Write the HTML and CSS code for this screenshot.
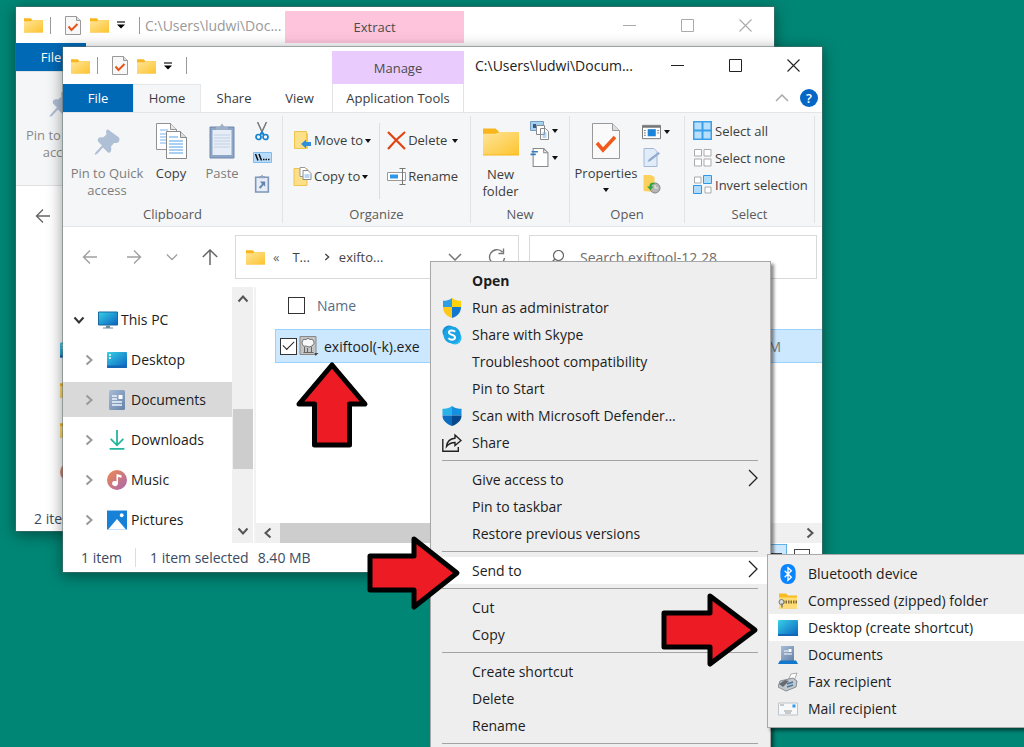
FILE: index.html
```html
<!DOCTYPE html>
<html lang="en">
<head>
<meta charset="utf-8">
<title>File Explorer</title>
<link rel="stylesheet" href="styles.css">
</head>
<body>
<svg class="defs" aria-hidden="true">
  <defs>
    <linearGradient id="gold" x1="0" y1="0" x2="1" y2="1"><stop offset="0" stop-color="#ffe59a"/><stop offset="1" stop-color="#fcc42f"/></linearGradient>
    <linearGradient id="sea" x1="0" y1="0" x2="1" y2="1"><stop offset="0" stop-color="#38cfe6"/><stop offset="1" stop-color="#0a63c0"/></linearGradient>
    <linearGradient id="tune" x1="0" y1="0" x2="1" y2="1"><stop offset="0" stop-color="#f08a4b"/><stop offset="1" stop-color="#a866b4"/></linearGradient>
    <linearGradient id="slate" x1="0" y1="0" x2="1" y2="1"><stop offset="0" stop-color="#a8bcd6"/><stop offset="1" stop-color="#6482a8"/></linearGradient>
  </defs>
  <symbol id="folder" viewBox="0 0 20 16"><path d="M0 1h7l2 2h11v13H0z" fill="#f9b61c"/><path d="M0 4h7l2-1h11v12.500H0z" fill="url(#gold)"/></symbol>
  <symbol id="doccheck" viewBox="0 0 16 19"><path d="M.5.5h11l4 4v14H.5z" fill="#f8f8f8" stroke="#999"/><path d="M11.500.5v4h4" fill="#ddd" stroke="#999"/><path d="M3.500 10.500l3 3.500 6-6" fill="none" stroke="#e8531b" stroke-width="2"/></symbol>
  <symbol id="custom" viewBox="0 0 8 8"><path d="M0 1h8" stroke="#222" stroke-width="1.300"/><path d="M0 3.500h8L4 7.500z" fill="#000"/></symbol>
  <symbol id="caret" viewBox="0 0 6 4"><path d="M0 0h6L3 4z" fill="#111"/></symbol>
  <symbol id="min" viewBox="0 0 13 13"><path d="M0 6.500h13" stroke="currentColor"/></symbol>
  <symbol id="max" viewBox="0 0 13 13"><path d="M.5.5h12v12H.5z" fill="none" stroke="currentColor"/></symbol>
  <symbol id="close" viewBox="0 0 13 13"><path d="M.5.5l12 12m0-12l-12 12" stroke="currentColor" stroke-width="1.100"/></symbol>
  <symbol id="pin" viewBox="0 0 26 27"><path d="M14 1L25 9c1.500 4-1 6-5 5.500l-3 3.500c1 5-1 7-3 6l-5-5-6 6.500-2.500 1 1-2.500L8 17l-4-4c-1-3 1-5 5-4l3.500-3c-1-3 0-5.500 1.500-5z" fill="#afbfd5"/></symbol>
  <symbol id="left" viewBox="0 0 16 16"><path d="M15 8H1.500M8 1.500L1.500 8 8 14.500" fill="none" stroke="currentColor" stroke-width="1.400"/></symbol>
  <symbol id="right" viewBox="0 0 16 16"><path d="M1 8h13.500M8 1.500L14.500 8 8 14.500" fill="none" stroke="currentColor" stroke-width="1.400"/></symbol>
  <symbol id="up" viewBox="0 0 16 16"><path d="M8 16V1M.8 8L8 1l7.200 7" fill="none" stroke="currentColor" stroke-width="1.500"/></symbol>
  <symbol id="down" viewBox="0 0 14 8"><path d="M1 1l6 6 6-6" fill="none" stroke="currentColor" stroke-width="1.500"/></symbol>
  <symbol id="chev" viewBox="0 0 8 12"><path d="M1.500 1.500L6.500 6l-5 4.500" fill="none" stroke="currentColor" stroke-width="2"/></symbol>
  <symbol id="chevd" viewBox="0 0 12 8"><path d="M1.500 1.500L6 6.500l4.500-5" fill="none" stroke="currentColor" stroke-width="2"/></symbol>
  <symbol id="chevu" viewBox="0 0 12 8"><path d="M1.500 6.500L6 1.500l4.500 5" fill="none" stroke="currentColor" stroke-width="2"/></symbol>
  <symbol id="copy" viewBox="0 0 32 36"><g stroke="#929292"><path d="M1.500.5h14l6 6v20h-20z" fill="#fff"/><path d="M15.500.5v6h6" fill="#e7e7e7"/></g><path d="M5 7h8M5 11h13M5 14h13M5 17h13M5 20h13" stroke="#79b4ee"/><g stroke="#888"><path d="M11.500 8.500h14l6 6v21h-20z" fill="#fff"/><path d="M25.500 8.500v6h6" fill="#ddd"/></g><path d="M14 14h9M14 18h14M14 21h14M14 24h14M14 27h14M14 30h14" stroke="#559fe8"/></symbol>
  <symbol id="paste" viewBox="0 0 26 36"><path d="M1 4h24v31H1z" fill="#8da5c6" stroke="#7088ad"/><path d="M3.500 7h19v25h-19z" fill="#e6edf7"/><path d="M5 12h16M5 15h16M5 18h16M5 21h16M5 24h16" stroke="#c2d0e4"/><path d="M7 7V4h3.500L13 .5 15.500 4H19v3z" fill="#9fb0c8"/></symbol>
  <symbol id="cut" viewBox="0 0 14 19"><path d="M2.500 0l6 13M11.500 0l-6 13" stroke="#777" stroke-width="1.500"/><g fill="none" stroke="#1682d0" stroke-width="1.700"><circle cx="3.500" cy="15" r="2.500"/><circle cx="10.500" cy="15" r="2.500"/><path d="M5 13l2-3 2 3"/></g></symbol>
  <symbol id="path" viewBox="0 0 19 11"><path d="M.5.5h18v10H.5z" fill="#b9dcfb" stroke="#82bdee"/><path d="M2.500 2l2.500 6.500M6 2l2.500 6.500" stroke="#111" stroke-width="1.500"/><path d="M10 7.500h7" stroke="#111" stroke-width="1.500" stroke-dasharray="1.500 1"/></symbol>
  <symbol id="pastelink" viewBox="0 0 14 18"><path d="M1 3h12v14H1z" fill="#e6edf7" stroke="#7e96b9" stroke-width="1.500"/><path d="M4 3V2h2l1-1.500L8 2h2v2H4z" fill="#90a4c1"/><path d="M5 7h5v5L8.500 10.500 5.500 14 4 12.500 7 9.500z" fill="#6684b0"/></symbol>
  <symbol id="moveto" viewBox="0 0 17 19"><path d="M.5.500h12v17H.500z" fill="#fddf88" stroke="#eec450"/><path d="M12.500 1l1.500 2v15l-1.500-1" fill="#f6c64b"/><path d="M7 13l5-4.500v2.500h5v4h-5v2.500z" fill="#2f8fdd"/></symbol>
  <symbol id="copyto" viewBox="0 0 18 19"><path d="M.5 1.500h13v17H.5z" fill="#fddf88" stroke="#eec450"/><path d="M6.500.5h5l3 3v6h-8z" fill="#fff" stroke="#999"/><path d="M9.500 3.500h5l3 3v6h-8z" fill="#fff" stroke="#888"/><path d="M11 8h5M11 10h5" stroke="#6aaceb"/></symbol>
  <symbol id="delete" viewBox="0 0 19 19"><path d="M1 1l17 17M18 1C12 6 6 12 1 18" fill="none" stroke="#de4412" stroke-width="2.200"/></symbol>
  <symbol id="rename" viewBox="0 0 19 17"><path d="M.5 4.500h18v8H.5z" fill="#fff" stroke="#999"/><path d="M3 6.500h8v4H3z" fill="#2f97e8"/><path d="M12.500.5h6M12.500 16.500h6M15.500.5v16" stroke="#777"/></symbol>
  <symbol id="newitem" viewBox="0 0 19 19"><path d="M.5.5h13v9H.5z" fill="#a6d0f2" stroke="#799dbd"/><path d="M3 3h3v4H3z" fill="#345c88"/><path d="M6.500 4.500h8v9h-8zM10.500 7.500h5l3 3v8h-8z" fill="#fff" stroke="#8a8a8a"/><path d="M12.500 12h4M12.500 14h4M12.500 16h4" stroke="#72afe9"/></symbol>
  <symbol id="easy" viewBox="0 0 17 18"><path d="M2.500.5h10l4 4v13h-14z" fill="#fff" stroke="#888"/><path d="M12.500.5v4h4" fill="none" stroke="#888"/><path d="M1 3.500h6M0 6h5" stroke="#367ebd" stroke-width="1.500"/></symbol>
  <symbol id="props" viewBox="0 0 28 36"><path d="M.5.5h20l7 7v28H.5z" fill="#fafafa" stroke="#999"/><path d="M20.500.5v7h7" fill="#ddd" stroke="#999"/><path d="M5 20l6 7L23 14" fill="none" stroke="#f05a1c" stroke-width="3.500"/></symbol>
  <symbol id="openapp" viewBox="0 0 20 15"><path d="M.5.500h19v14H.5z" fill="#fff" stroke="#747474"/><path d="M1 2h18" stroke="#747474" stroke-width="2"/><path d="M6 4.500h8.500v7.500H6z" fill="#1b83d8"/><path d="M2 6h2M2 8.500h2M2 11h2M16 6h2M16 8.500h2" stroke="#777"/></symbol>
  <symbol id="edit" viewBox="0 0 18 19"><path d="M1.500.5h10l3 3v15h-13z" fill="#e1ecfa" stroke="#a4b8d5"/><path d="M5 14l1.500-3L16 4l1.500 1.500L8 13z" fill="#91acd0"/></symbol>
  <symbol id="history" viewBox="0 0 18 19"><path d="M1 0h7l4 2v15l-11-1z" fill="#fbd15b"/><circle cx="12.500" cy="13" r="5" fill="#b6b6b6" stroke="#858585"/><path d="M12.500 10v3h3" fill="none" stroke="#eee"/><path d="M12 8c-4-1-5 1-5 3.500H4.500L8 15l3-3.500H9c0-2 1-2.500 3-2z" fill="#28a53d"/></symbol>
  <symbol id="selall" viewBox="0 0 19 19"><path d="M0 0h19v19H0z" fill="#3b9fe8"/><path d="M1.500 1.500h7v7h-7zM10.500 1.500h7v7h-7zM1.500 10.500h7v7h-7zM10.500 10.500h7v7h-7z" fill="#b8dffb"/></symbol>
  <symbol id="selnone" viewBox="0 0 19 19"><path d="M1.500 1.500h7v6.500h-7zM11 1.500h7v6.500h-7zM1.500 11h7v7h-7zM11 11h7v7h-7z" fill="#fff" stroke="#aaa"/></symbol>
  <symbol id="selinv" viewBox="0 0 19 19"><path d="M1.500 2h6.500v6H1.500zM12 12h6v6h-6z" fill="#fff" stroke="#aaa"/><path d="M10.500.5h8v8h-8zM.5 10.500h8v8h-8z" fill="#b0dcfc" stroke="#2f97e8"/></symbol>
  <symbol id="pc" viewBox="0 0 20 17"><path d="M.5.5h19v13H.5z" fill="url(#sea)" stroke="#1769a0"/><path d="M8 14h4v2h3v1H5v-1h3z" fill="#71899b"/></symbol>
  <symbol id="desk" viewBox="0 0 20 16"><rect width="20" height="16" rx="1" fill="url(#sea)"/><path d="M2 3h2M2 6h2" stroke="#fff" stroke-width="1.500"/><path d="M0 13.500h20V15q0 1-1 1H1q-1 0-1-1z" fill="#1467b5"/></symbol>
  <symbol id="deskplain" viewBox="0 0 20 16"><rect width="20" height="16" rx="1" fill="url(#sea)"/><path d="M0 14h20v2H0z" fill="#1467b5"/></symbol>
  <symbol id="docs" viewBox="0 0 16 20"><rect width="16" height="20" rx="1.500" fill="url(#slate)"/><path d="M3 6h5M3 9h5M3 12h10M3 15h10" stroke="#eef4fc" stroke-width="1.300"/><path d="M9.500 5h4v4h-4z" fill="#fff"/></symbol>
  <symbol id="downl" viewBox="0 0 14 19"><path d="M7 0v14M1 8.500l6 6 6-6M0 18h14" fill="none" stroke="#25b49c" stroke-width="1.700"/></symbol>
  <symbol id="music" viewBox="0 0 20 20"><circle cx="10" cy="10" r="10" fill="url(#tune)"/><path d="M9.500 4l5 1.200v2.500L11 7v6.500a3 2.600 0 1 1-1.500-2.200z" fill="#fff"/></symbol>
  <symbol id="pics" viewBox="0 0 19 18"><path d="M0 0h19v18H0z" fill="#1681d7"/><path d="M1 18L9.500 8 18 18z" fill="#fff"/><circle cx="14" cy="4.500" r="1.800" fill="#fff"/></symbol>
  <symbol id="exe" viewBox="0 0 19 20"><path d="M.5.5h16v18H.5z" fill="#c4c4c4" stroke="#888"/><path d="M2.500 6q1-4 4-2.500 2-2.500 4 0 4-1 4 4l-2 2.500q-3 2-6 0-4 1-4-4z" fill="#f7f7f7" stroke="#555" stroke-width=".8"/><path d="M5 16v-5M8 17v-5M12 16v-5M4 16.500h10" stroke="#666"/><path d="M15 17h4l-3 3z" fill="#444"/></symbol>
  <symbol id="uac" viewBox="0 0 20 20"><path d="M10 0C7 2.500 4 2.800 1 2.800V9h9z" fill="#2f9fe5"/><path d="M10 0c3 2.500 6 2.800 9 2.800V9h-9z" fill="#ffd20a"/><path d="M1 9c0 5 3 9 9 11V9z" fill="#ffc91a"/><path d="M19 9c0 5-3 9-9 11V9z" fill="#1277cf"/></symbol>
  <symbol id="skype" viewBox="0 0 20 20"><circle cx="7" cy="7" r="6.500" fill="#1192d8"/><circle cx="13" cy="13" r="6.500" fill="#29b8ef"/><circle cx="10" cy="10" r="8.500" fill="#1aa4e6"/><path d="M13.200 6.700C11.500 5 7 4.700 7 7.500s6 1.700 6 4.800-4.800 3-6.500.8" fill="none" stroke="#fff" stroke-width="2"/></symbol>
  <symbol id="defender" viewBox="0 0 20 21"><path d="M10 0C7 2.500 3 3 0 3v7h10z" fill="#29b2ea"/><path d="M10 0c3 2.500 7 3 10 3v7H10z" fill="#158fe0"/><path d="M0 10c0 5 4 9 10 11V10z" fill="#0c6cc0"/><path d="M20 10c0 5-4 9-10 11V10z" fill="#07488d"/></symbol>
  <symbol id="share" viewBox="0 0 20 18"><path d="M.8 5v12.200h15.500V13" fill="none" stroke="#222" stroke-width="1.400"/><path d="M13 1l6 5.500-6 5V8.500c-4 0-6 1-8.500 4C5 8 8 4.500 13 4.200z" fill="none" stroke="#222" stroke-width="1.400"/></symbol>
  <symbol id="sub" viewBox="0 0 10 18"><path d="M1 1l8 8-8 8" fill="none" stroke="#222" stroke-width="1.300"/></symbol>
  <symbol id="bt" viewBox="0 0 16 21"><rect width="16" height="21" rx="7.500" fill="#0a84ff"/><path d="M4.500 7l7 7L8 17V4l3.500 3-7 7" fill="none" stroke="#fff" stroke-width="1.400"/></symbol>
  <symbol id="zip" viewBox="0 0 20 15"><path d="M1 0h7l2 2h9v13H1z" fill="#f9bb22"/><path d="M1 4h18v11H1z" fill="#ffdc75"/><path d="M5 8.500h14" stroke="#806a35" stroke-width="3" stroke-dasharray="1.500 1"/><circle cx="3.500" cy="8.500" r="2.500" fill="#ddd" stroke="#777"/><path d="M4 10v4" stroke="#777" stroke-width="1.500"/></symbol>
  <symbol id="docstand" viewBox="0 0 20 18"><path d="M3 0h13v15H3z" fill="url(#slate)"/><path d="M6 5h4M6 8h8" stroke="#fff"/><path d="M10.500 3h3v3h-3z" fill="#fff"/><path d="M2 14.500h16l2 3.500H0z" fill="#1377cc"/></symbol>
  <symbol id="fax" viewBox="0 0 20 18"><path d="M10 8l3-7 6-1-3 8z" fill="#fff" stroke="#999" stroke-width=".8"/><path d="M2 8l13-3 4 3-1 6-10 4-8-4z" fill="#c3c8ce" stroke="#74797f" stroke-width=".8"/><path d="M1 11l6-4 4 1-6 6z" fill="#656b72"/><path d="M9 11l6-2M9 14l6-2" stroke="#47749b" stroke-width="1.500"/></symbol>
  <symbol id="mail" viewBox="0 0 20 13"><path d="M.5.5h19v12H.5z" fill="#f7f8fa" stroke="#bcc4cc"/><path d="M6 8.500h8M7 10.500h6M2 2.500h4" stroke="#999"/><path d="M14.500 2h3v3h-3z" fill="#2f9ae5"/></symbol>
  <symbol id="refresh" viewBox="0 0 18 18"><path d="M14.500 4A7.500 7.500 0 1 0 16.500 10M15.500.5V5.500H10.500" fill="none" stroke="#777" stroke-width="1.400"/></symbol>
  <symbol id="lens" viewBox="0 0 14 14"><circle cx="8.500" cy="5.500" r="5" fill="none" stroke="#666" stroke-width="1.200"/><path d="M5 9L.5 13.500" stroke="#666" stroke-width="1.200"/></symbol>
</svg>

<main class="desktop">
  <section class="window back" aria-label="Background folder window">
    <header class="head">
      <div class="quick">
        <svg class="i20x16"><use href="#folder"/></svg><span class="bar"></span>
        <svg class="i16x19 check"><use href="#doccheck"/></svg>
        <svg class="i20x16 f2"><use href="#folder"/></svg>
        <svg class="i8 cust"><use href="#custom"/></svg><span class="bar b2"></span>
        <span class="path">C:\Users\ludwi\Doc...</span>
      </div>
      <div class="extract">Extract</div>
      <div class="controls">
        <button aria-label="Minimize"><svg class="i13"><use href="#min"/></svg></button>
        <button aria-label="Maximize"><svg class="i13"><use href="#max"/></svg></button>
        <button aria-label="Close"><svg class="i13"><use href="#close"/></svg></button>
      </div>
    </header>
    <div class="tabs"><button class="tab file">File</button></div>
    <div class="backribbon"><button class="big"><svg class="pin"><use href="#pin"/></svg><span>Pin to Quick<br>access</span></button></div>
    <div class="backnav"><svg class="i16"><use href="#left"/></svg></div>
    <div class="backtree">
      <svg class="i20x16"><use href="#desk"/></svg>
      <svg class="i20x16"><use href="#folder"/></svg>
      <svg class="i20x16"><use href="#folder"/></svg>
      <svg class="i20"><use href="#music"/></svg>
    </div>
    <footer class="status">2 items</footer>
  </section>

  <section class="window front" aria-label="exiftool folder window">
    <header class="head">
      <div class="quick">
        <svg class="i20x16"><use href="#folder"/></svg><span class="bar"></span>
        <svg class="i16x19 check"><use href="#doccheck"/></svg>
        <svg class="i20x16 f2"><use href="#folder"/></svg>
        <svg class="i8 cust"><use href="#custom"/></svg><span class="bar b2"></span>
      </div>
      <div class="manage">Manage</div>
      <h1 class="title">C:\Users\ludwi\Docum...</h1>
      <div class="controls">
        <button aria-label="Minimize"><svg class="i13"><use href="#min"/></svg></button>
        <button aria-label="Maximize"><svg class="i13"><use href="#max"/></svg></button>
        <button aria-label="Close"><svg class="i13"><use href="#close"/></svg></button>
      </div>
    </header>
    <nav class="tabs">
      <button class="tab file">File</button>
      <button class="tab home">Home</button>
      <button class="tab sharetab">Share</button>
      <button class="tab view">View</button>
      <button class="tab app">Application Tools</button>
      <span class="grow"></span>
      <button class="collapse" aria-label="Collapse ribbon"><svg class="i14x8"><use href="#down"/></svg></button>
      <button class="help" aria-label="Help">?</button>
    </nav>
    <div class="ribbon">
      <div class="group clip">
        <div class="tools">
          <button class="big dim pinbtn"><svg class="pin"><use href="#pin"/></svg><span>Pin to Quick<br>access</span></button>
          <button class="big copybtn"><svg class="i32x36"><use href="#copy"/></svg><span>Copy</span></button>
          <button class="big dim pastebtn"><svg class="i26x36"><use href="#paste"/></svg><span>Paste</span></button>
          <div class="minis">
            <button aria-label="Cut"><svg class="i16x19"><use href="#cut"/></svg></button>
            <button aria-label="Copy path"><svg class="i19x11"><use href="#path"/></svg></button>
            <button aria-label="Paste shortcut"><svg class="i16x19"><use href="#pastelink"/></svg></button>
          </div>
        </div>
        <div class="label">Clipboard</div>
      </div>
      <div class="group organize">
        <div class="tools">
          <div class="pair">
            <button><svg class="i19"><use href="#moveto"/></svg>Move to<svg class="caret"><use href="#caret"/></svg></button>
            <button><svg class="i19"><use href="#copyto"/></svg>Copy to<svg class="caret"><use href="#caret"/></svg></button>
          </div>
          <div class="pair second">
            <button><svg class="i19"><use href="#delete"/></svg>Delete<svg class="caret far"><use href="#caret"/></svg></button>
            <button><svg class="i19"><use href="#rename"/></svg>Rename</button>
          </div>
        </div>
        <div class="label">Organize</div>
      </div>
      <div class="group new">
        <div class="tools">
          <button class="big newbtn"><svg class="i36"><use href="#folder"/></svg><span>New<br>folder</span></button>
          <div class="minis">
            <button aria-label="New item"><svg class="i19"><use href="#newitem"/></svg><svg class="caret"><use href="#caret"/></svg></button>
            <button aria-label="Easy access"><svg class="i19"><use href="#easy"/></svg><svg class="caret"><use href="#caret"/></svg></button>
          </div>
        </div>
        <div class="label">New</div>
      </div>
      <div class="group open">
        <div class="tools">
          <button class="big propbtn"><svg class="i28x36"><use href="#props"/></svg><span>Properties</span><svg class="caret"><use href="#caret"/></svg></button>
          <div class="minis">
            <button aria-label="Open with"><svg class="i20x16"><use href="#openapp"/></svg><svg class="caret"><use href="#caret"/></svg></button>
            <button aria-label="Edit"><svg class="i19"><use href="#edit"/></svg></button>
            <button aria-label="History"><svg class="i19"><use href="#history"/></svg></button>
          </div>
        </div>
        <div class="label">Open</div>
      </div>
      <div class="group select">
        <div class="tools">
          <div class="trio">
            <button><svg class="i19"><use href="#selall"/></svg>Select all</button>
            <button><svg class="i19"><use href="#selnone"/></svg>Select none</button>
            <button><svg class="i19"><use href="#selinv"/></svg>Invert selection</button>
          </div>
        </div>
        <div class="label">Select</div>
      </div>
    </div>
    <div class="navrow">
      <div class="arrows">
        <button aria-label="Back"><svg class="i16"><use href="#left"/></svg></button>
        <button class="fwd" aria-label="Forward"><svg class="i16"><use href="#right"/></svg></button>
        <button aria-label="Recent"><svg class="i12x8"><use href="#down"/></svg></button>
        <button class="dark" aria-label="Up"><svg class="i16"><use href="#up"/></svg></button>
      </div>
      <div class="address">
        <svg class="i20x16"><use href="#folder"/></svg><span class="angle">«</span><span class="crumb">T...</span>
        <svg class="i8 sepchev"><use href="#chev"/></svg><span>exifto...</span>
        <span class="grow"></span>
        <svg class="i14x8 drop"><use href="#down"/></svg><svg class="i18"><use href="#refresh"/></svg>
      </div>
      <label class="search"><svg class="i14"><use href="#lens"/></svg><input type="text" placeholder="Search exiftool-12.28" aria-label="Search"></label>
    </div>
    <div class="content">
      <nav class="tree">
        <a class="node root" href="#"><svg class="i12x8"><use href="#chevd"/></svg><svg class="i20"><use href="#pc"/></svg>This PC</a>
        <a class="node" href="#"><svg class="i8x12"><use href="#chev"/></svg><svg class="i20"><use href="#desk"/></svg>Desktop</a>
        <a class="node picked" href="#"><svg class="i8x12"><use href="#chev"/></svg><svg class="i20"><use href="#docs"/></svg>Documents</a>
        <a class="node" href="#"><svg class="i8x12"><use href="#chev"/></svg><svg class="i20"><use href="#downl"/></svg>Downloads</a>
        <a class="node" href="#"><svg class="i8x12"><use href="#chev"/></svg><svg class="i20"><use href="#music"/></svg>Music</a>
        <a class="node" href="#"><svg class="i8x12"><use href="#chev"/></svg><svg class="i20"><use href="#pics"/></svg>Pictures</a>
      </nav>
      <div class="vscroll"><svg class="i12x8"><use href="#chevu"/></svg><span class="thumb"></span><svg class="i12x8"><use href="#chevd"/></svg></div>
      <div class="pane">
        <div class="colhead"><input type="checkbox" id="all"><label for="all">Name</label></div>
        <div class="filerow"><input type="checkbox" id="f1" checked><svg class="i20"><use href="#exe"/></svg><label for="f1">exiftool(-k).exe</label><span class="date">8:21 AM</span></div>
        <span class="grow"></span>
        <div class="hscroll"><svg class="i8x12"><use href="#chev"/></svg><span class="thumb"></span><svg class="i8x12"><use href="#chev"/></svg></div>
      </div>
    </div>
    <footer class="status"><span>1 item</span><span class="selinfo">1 item selected</span><span>8.40 MB</span><span class="grow"></span><span class="viewbtn on"></span><span class="viewbtn"></span></footer>
  </section>

  <div class="menu context" role="menu">
    <button role="menuitem"><span class="ic"></span><b>Open</b></button>
    <button role="menuitem"><span class="ic"><svg class="i20"><use href="#uac"/></svg></span>Run as administrator</button>
    <button role="menuitem"><span class="ic"><svg class="i20"><use href="#skype"/></svg></span>Share with Skype</button>
    <button role="menuitem"><span class="ic"></span>Troubleshoot compatibility</button>
    <button role="menuitem"><span class="ic"></span>Pin to Start</button>
    <button role="menuitem"><span class="ic"><svg class="i20"><use href="#defender"/></svg></span>Scan with Microsoft Defender...</button>
    <button role="menuitem"><span class="ic"><svg class="i20"><use href="#share"/></svg></span>Share</button>
    <hr>
    <button role="menuitem"><span class="ic"></span>Give access to<svg class="more"><use href="#sub"/></svg></button>
    <button role="menuitem"><span class="ic"></span>Pin to taskbar</button>
    <button role="menuitem"><span class="ic"></span>Restore previous versions</button>
    <hr>
    <button role="menuitem" class="hot"><span class="ic"></span>Send to<svg class="more"><use href="#sub"/></svg></button>
    <hr>
    <button role="menuitem"><span class="ic"></span>Cut</button>
    <button role="menuitem"><span class="ic"></span>Copy</button>
    <hr>
    <button role="menuitem"><span class="ic"></span>Create shortcut</button>
    <button role="menuitem"><span class="ic"></span>Delete</button>
    <button role="menuitem"><span class="ic"></span>Rename</button>
    <hr>
  </div>

  <div class="menu sendto" role="menu">
    <button role="menuitem"><span class="ic"><svg class="i20"><use href="#bt"/></svg></span>Bluetooth device</button>
    <button role="menuitem"><span class="ic"><svg class="i20"><use href="#zip"/></svg></span>Compressed (zipped) folder</button>
    <button role="menuitem" class="hot"><span class="ic"><svg class="i20"><use href="#deskplain"/></svg></span>Desktop (create shortcut)</button>
    <button role="menuitem"><span class="ic"><svg class="i20"><use href="#docstand"/></svg></span>Documents</button>
    <button role="menuitem"><span class="ic"><svg class="i20"><use href="#fax"/></svg></span>Fax recipient</button>
    <button role="menuitem"><span class="ic"><svg class="i20"><use href="#mail"/></svg></span>Mail recipient</button>
  </div>

  <svg class="arrow a1" viewBox="0 0 72 86"><path d="M36 3L69 42H53.500V83H18.500V42H3z"/></svg>
  <svg class="arrow a2" viewBox="0 0 94 74"><path d="M3 20H47V3L90 37 47 71V54H3z"/></svg>
  <svg class="arrow a2 a3" viewBox="0 0 94 74"><path d="M3 20H49V3L94 37 49 71V54H3z"/></svg>
</main>
</body>
</html>
```

FILE: styles.css
```css
* { box-sizing: border-box; }
body { margin: 0; overflow: hidden; font-family: "Open Sans", "Noto Sans", sans-serif; font-size: 14px; color: #1c1c1c; }
button { font: inherit; color: inherit; border: 0; background: none; padding: 0; display: flex; align-items: center; }
a { color: inherit; text-decoration: none; }
svg { display: block; flex: none; }
.defs { position: absolute; width: 0; height: 0; }
.grow { flex: 1; }
.desktop { position: relative; height: 100vh; overflow: hidden; background: #008675; }

.i8 { width: 8px; height: 8px; }
.i8x12 { width: 8px; height: 12px; }
.i12x8 { width: 12px; height: 8px; }
.i13 { width: 13px; height: 13px; }
.i14 { width: 14px; height: 14px; }
.i14x8 { width: 14px; height: 8px; }
.i16 { width: 16px; height: 16px; }
.i16x19 { width: 16px; height: 19px; }
.i18 { width: 18px; height: 18px; }
.i19 { width: 19px; height: 19px; }
.i19x11 { width: 19px; height: 11px; }
.i20 { width: 20px; height: 20px; }
.i20x16 { width: 19px; height: 16px; }
.i26x36 { width: 26px; height: 36px; }
.i28x36 { width: 28px; height: 36px; }
.i32x36 { width: 32px; height: 36px; }
.i36 { width: 36px; height: 36px; }
.pin { width: 26px; height: 28px; }
.caret { width: 6px; height: 4px; }

.window { position: absolute; display: flex; flex-direction: column; background: #fff; border: 1px solid rgba(90, 110, 110, .5); background-clip: padding-box; box-shadow: 0 3px 14px rgba(0, 0, 0, .4); }
.back { left: 15px; right: 249px; top: 6px; }
.front { left: 62px; right: 201px; top: 46px; }

.head { display: flex; height: 37px; }
.quick { display: flex; align-items: center; padding-left: 8px; }
.bar { width: 1px; height: 17px; margin-left: 7px; background: #999; }
.bar.b2 { margin-left: 14px; }
.check { margin-left: 14px; }
.f2 { margin-left: 9px; }
.cust { margin-left: 8px; }
.front .quick { width: 269px; flex: none; }
.manage { width: 132px; margin-top: 4px; display: flex; align-items: center; justify-content: center; background: #e9cbfd; font-size: 13px; color: #4b4b4b; }
.title { flex: 1; margin: 0; padding-left: 11px; font-size: 14px; font-weight: 400; line-height: 38px; white-space: nowrap; }
.controls { display: flex; align-items: center; gap: 45px; padding-right: 22px; color: #222; }
.back .head { height: 36px; }
.back .quick { width: 269px; flex: none; color: #999; }
.path { margin-left: 5px; white-space: nowrap; }
.extract { width: 179px; margin-top: 4px; background: #fec4dc; display: flex; align-items: center; justify-content: center; font-size: 13px; color: #4b4b4b; }
.back .controls { margin-left: auto; color: #aaa; }

.tabs { display: flex; height: 28px; font-size: 13px; color: #3b3b3b; }
.tab { justify-content: center; white-space: nowrap; }
.tab.file { width: 70px; background: #0069b6; color: #fff; }
.home { width: 68px; background: #f5f6f7; border: 1px solid #e6e7e9; border-bottom: 0; padding-bottom: 1px; }
.sharetab { width: 66px; }
.view { width: 65px; }
.app { width: 132px; border: solid #e3e3e3; border-width: 0 1px; }
.collapse { color: #aaa; margin-right: 11px; transform: rotate(180deg); }
.help { width: 18px; height: 18px; margin: 5px 4px 0 0; border-radius: 50%; justify-content: center; background: #0567c5; color: #fff; font-weight: 600; font-size: 13px; }

.ribbon { display: flex; height: 115px; background: #f5f6f7; border: solid #e4e5e7; border-width: 1px 0; font-size: 13px; color: #3d3d3d; padding-top: 3px; }
.group { display: flex; flex-direction: column; height: 107px; border-right: 1px solid #e2e3e5; }
.tools { display: flex; flex: 1; }
.label { text-align: center; line-height: 18px; color: #5a5a5a; }
.big { flex-direction: column; justify-content: flex-start; line-height: 17px; gap: 6px; text-align: center; white-space: nowrap; }
.dim { color: #7d7d7d; }
.clip { width: 220px; }
.pinbtn { width: 88px; padding-top: 12px; gap: 9px; }
.copybtn { width: 40px; padding-top: 7px; }
.pastebtn { width: 62px; padding-top: 7px; }
.minis { display: flex; flex-direction: column; align-items: center; gap: 8px; padding-top: 5px; }
.clip .minis { gap: 11px; width: 18px; padding-top: 6px; }
.minis button { gap: 3px; }
.organize { width: 188px; padding-left: 10px; }
.organize .label { padding-right: 10px; }
.pair { display: flex; flex-direction: column; gap: 17px; padding-top: 15px; }
.pair button { gap: 2px; white-space: nowrap; line-height: 19px; }
.second { margin: 7px 0 0 8px; padding: 8px 0 0 7px; border-left: 1px solid #dcdddf; height: 76px; }
.far { margin-left: 3px; }
.new { width: 99px; }
.newbtn { width: 59px; gap: 8px; padding-top: 7px; }
.newbtn span { margin-top: -1px; }
.open { width: 115px; }
.propbtn { width: 72px; padding-top: 7px; }
.open .minis { align-items: flex-start; padding-top: 8px; }
.select { width: 130px; }
.trio { display: flex; flex-direction: column; gap: 8px; padding: 5px 0 0 8px; }
.trio button { gap: 3px; line-height: 18px; white-space: nowrap; }

.navrow { display: flex; gap: 10px; padding: 8px 5px 8px 0; height: 60px; }
.arrows { display: flex; align-items: center; gap: 24px; width: 162px; padding-left: 19px; color: #a0a0a0; }
.arrows .fwd { margin-left: 4px; }
.arrows .dark { color: #666; }
.address { display: flex; align-items: center; width: 284px; border: 1px solid #d9d9d9; padding: 0 12px 0 10px; color: #444; font-size: 13px; }
.angle { margin-left: 8px; color: #666; }
.crumb { margin-left: 13px; }
.sepchev { margin: 0 8px 0 13px; }
.drop { color: #777; }
.address .i18 { margin-left: 26px; }
.search { display: flex; align-items: center; flex: 1; border: 1px solid #d9d9d9; padding-left: 20px; gap: 16px; }
.search input { border: 0; padding: 0; width: 160px; font: inherit; color: #6d6d6d; outline: 0; }
.search input::placeholder { color: #6d6d6d; opacity: 1; }

.content { display: flex; height: 256px; }
.tree { width: 169px; padding-top: 15px; display: flex; flex-direction: column; gap: 5px; overflow: hidden; }
.node { display: flex; flex: none; align-items: center; height: 35px; padding-left: 22px; }
.node svg:first-child { color: #999; margin-right: 14px; }
.node svg:nth-child(2) { margin-right: 4px; }
.node.root { padding-left: 10px; }
.node.root svg:first-child { color: #333; margin-right: 13px; }
.node.root svg:nth-child(2) { margin-right: 3px; }
.picked { background: #d9d9d9; }
.vscroll { width: 22px; display: flex; flex-direction: column; align-items: center; justify-content: space-between; padding: 8px 0; background: #f0f0f0; border-right: 1px solid #fff; color: #555; }
.vscroll .thumb { width: 20px; height: 60px; margin-top: 48px; background: #cdcdcd; }
.pane { flex: 1; display: flex; flex-direction: column; border-left: 2px solid #f2f2f2; }
.colhead { display: flex; align-items: center; gap: 12px; padding: 7px 0 0 32px; height: 29px; color: #5a6c85; }
input[type="checkbox"] { appearance: none; width: 17px; height: 17px; margin: 0; border: 1px solid #333; background: #fff; }
input[type="checkbox"]:checked { display: grid; place-items: center; }
input[type="checkbox"]:checked::after { content: ""; width: 10px; height: 5px; border: solid #222; border-width: 0 0 1px 1px; transform: rotate(-45deg); margin-bottom: 4px; }
.filerow { display: flex; align-items: center; height: 34px; margin: 13px 0 0 19px; padding-left: 4px; background: #cce8ff; border: 1px solid #99d1ff; border-right: 0; }
.filerow svg { margin: 0 5px 0 2px; }
.date { margin-left: auto; padding-right: 41px; color: #777; }
.hscroll { display: flex; align-items: center; height: 20px; background: #f0f0f0; padding: 0 8px; color: #555; gap: 8px; }
.hscroll svg:first-child { transform: rotate(180deg); }
.hscroll .thumb { width: 300px; height: 20px; background: #cdcdcd; }
.hscroll svg:last-child { margin-left: auto; }
.status { display: flex; align-items: center; height: 29px; padding-left: 18px; color: #3a4a63; }
.selinfo { margin: 0 9px 0 13px; padding-left: 14px; border-left: 1px solid #ddd; }
.viewbtn { width: 16px; height: 18px; margin: 0 12px 0 0; border: 1px solid #444; }
.viewbtn.on { width: 22px; height: 28px; margin-right: 7px; border-color: #5fb1e8; background: linear-gradient(#444, #444) center 8px / 12px 1px no-repeat #cce8ff; }

.backribbon { height: 115px; padding: 18px 0 0 10px; background: #f5f6f7; border: solid #e0e1e3; border-width: 1px 0; color: #8a8a8a; font-size: 13px; }
.backribbon .big { gap: 9px; }
.backnav { height: 60px; padding: 22px 0 0 19px; color: #666; }
.backtree { display: flex; flex-direction: column; gap: 24px; height: 259px; padding: 96px 0 0 44px; }
.back .status { height: 26px; }

.menu { position: absolute; background: #eee; border: 1px solid #a8a8a8; padding: 5px 2px; box-shadow: 3px 3px 3px rgba(0, 0, 0, .45); }
.context { left: 430px; top: 261px; bottom: -10px; width: 341px; }
.sendto { left: 767px; top: 554px; width: 300px; padding: 5px 1px; }
.menu button { width: 100%; height: 27px; white-space: nowrap; }
.ic { width: 39px; padding-left: 9px; flex: none; }
.menu hr { height: 1px; margin: 4px 10px 5px 9px; border: 0; background: #a3a3a3; }
.menu .hot { background: #fff; }
.more { width: 10px; height: 18px; margin: 0 10px 4px auto; }

.arrow { position: absolute; fill: #ed1c24; stroke: #000; stroke-width: 5px; stroke-linejoin: round; overflow: visible; }
.a1 { left: 296px; top: 362px; width: 72px; height: 86px; }
.a2 { left: 367px; top: 536px; width: 94px; height: 74px; }
.a3 { left: 661px; top: 593px; }
```
